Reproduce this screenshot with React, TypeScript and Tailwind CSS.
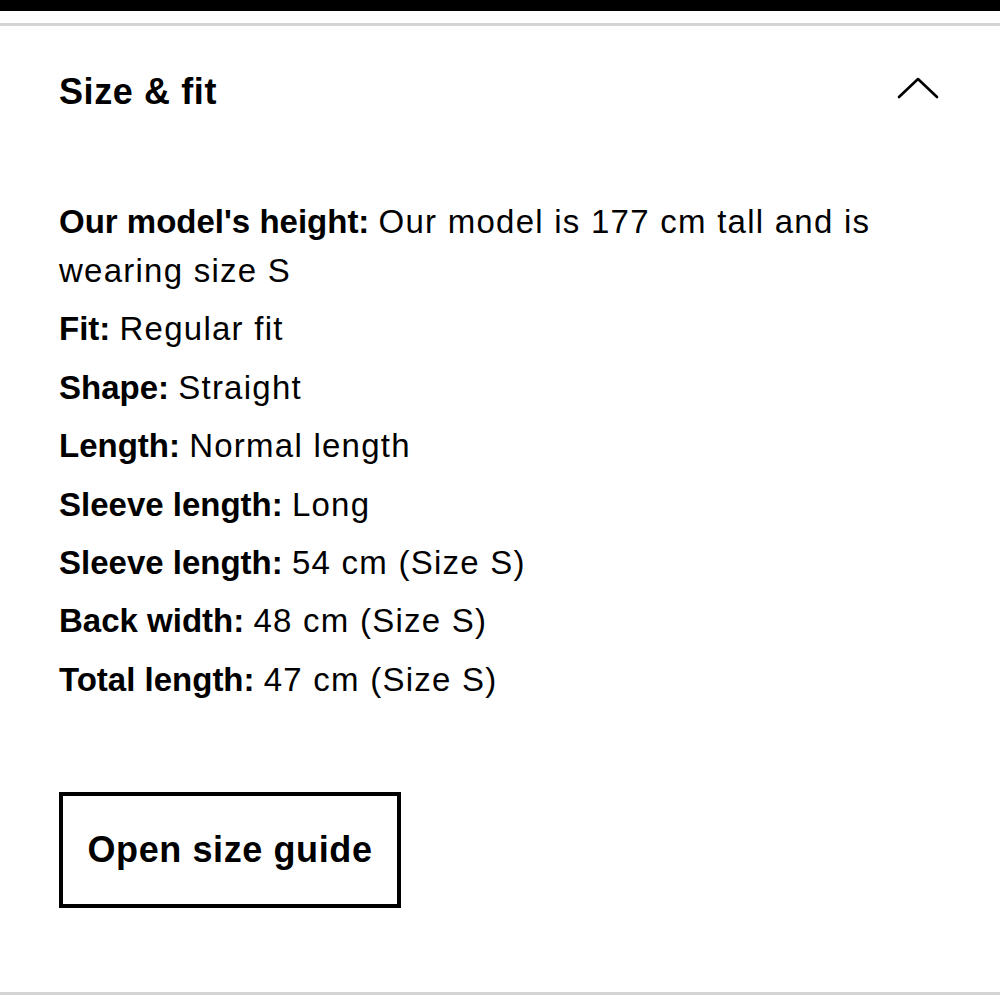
import React from "react";

const rows: [string, string][] = [
  ["Our model's height:", "Our model is 177 cm tall and is wearing size S"],
  ["Fit:", "Regular fit"],
  ["Shape:", "Straight"],
  ["Length:", "Normal length"],
  ["Sleeve length:", "Long"],
  ["Sleeve length:", "54 cm (Size S)"],
  ["Back width:", "48 cm (Size S)"],
  ["Total length:", "47 cm (Size S)"],
];

export default function App() {
  return (
    <div
      className="w-[1000px] h-[998px] bg-white text-black flex flex-col overflow-hidden"
      style={{ fontFamily: '"Liberation Sans", Arial, sans-serif' }}
    >
      <div className="h-[11px] bg-black" />
      <div className="h-[12px] bg-white" />
      <div className="h-[3px] bg-[#d4d4d4]" />
      <div className="flex-1 flex flex-col px-[59px]">
        <div className="flex items-center justify-between h-[132px] pr-[2px]">
          <h2 className="text-[36px] font-bold leading-none tracking-[0.6px]">Size &amp; fit</h2>
          <svg width="42" height="24" viewBox="0 0 42 24" fill="none" className="mb-[9px]">
            <path d="M2 21 L21 3 L40 21" stroke="#000" strokeWidth="2.6" strokeLinecap="round" strokeLinejoin="round" />
          </svg>
        </div>
        <div className="flex flex-col gap-[9.4px] mt-[39px] text-[33px] leading-[49px]">
          {rows.map(([k, v], i) => (
            <p key={i}>
              <span className="font-bold">{k}</span>{" "}
              <span className="tracking-[1.25px]">{v}</span>
            </p>
          ))}
        </div>
        <button className="mt-[88px] w-[342px] h-[116px] border-[4px] border-black flex items-center justify-center text-[36px] font-bold tracking-[0.6px]">
          Open size guide
        </button>
        <div className="flex-1" />
      </div>
      <div className="h-[3px] bg-[#d4d4d4] mb-[3px]" />
    </div>
  );
}
